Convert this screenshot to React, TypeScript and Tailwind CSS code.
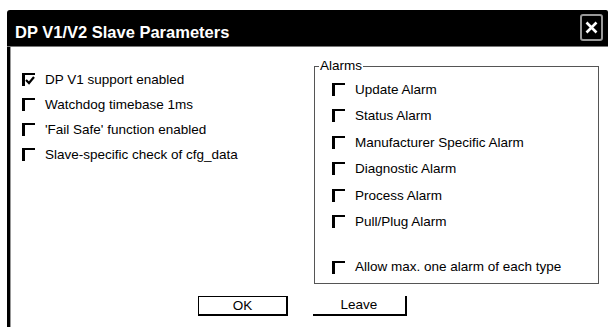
import React from "react";

function Box({ checked }: { checked?: boolean }) {
  return (
    <span className="relative w-[13px] h-[13px] border-t-2 border-l-[3px] border-black shrink-0 flex items-center justify-center">
      {checked && (
        <svg width="10" height="9" viewBox="0 0 10 9" className="-mt-[1px]">
          <polyline points="1,4 4,7 9,1" fill="none" stroke="#000" strokeWidth="2.2" />
        </svg>
      )}
    </span>
  );
}

function Row({ label, checked, h }: { label: string; checked?: boolean; h: string }) {
  return (
    <div className={`flex items-center gap-[10px] ${h}`}>
      <Box checked={checked} />
      <span className="leading-none whitespace-nowrap">{label}</span>
    </div>
  );
}

export default function App() {
  const left = [
    { l: "DP V1 support enabled", c: true },
    { l: "Watchdog timebase 1ms" },
    { l: "'Fail Safe' function enabled" },
    { l: "Slave-specific check of cfg_data" },
  ];
  const alarms = [
    "Update Alarm",
    "Status Alarm",
    "Manufacturer Specific Alarm",
    "Diagnostic Alarm",
    "Process Alarm",
    "Pull/Plug Alarm",
  ];
  return (
    <div
      className="w-[608px] h-[327px] bg-white pt-[10px] pl-[7px] overflow-hidden flex flex-col text-black text-[13.5px]"
      style={{ fontFamily: "'Liberation Sans', Arial, sans-serif" }}
    >
      <div className="h-[37px] bg-black border-b border-[#777] rounded-tl-[3px] rounded-tr-[2px] flex items-center justify-between pl-[8px] pr-[5px] shrink-0">
        <span className="text-white font-bold text-[16.5px] leading-none mt-[8px] whitespace-nowrap">
          DP V1/V2 Slave Parameters
        </span>
        <span className="w-[23px] h-[27px] border-2 border-[#999] rounded-[3px] flex items-center justify-center -mt-[1px]">
          <svg width="13" height="13" viewBox="0 0 13 13">
            <path d="M1.5 1.5 L11.5 11.5 M11.5 1.5 L1.5 11.5" stroke="#fff" strokeWidth="2.6" />
          </svg>
        </span>
      </div>
      <div className="flex-1 border-l-[3px] border-black flex">
        <div className="flex-1 border-l border-[#999] flex flex-col">
          <div className="flex">
            <div className="flex-1 flex flex-col pt-[20px] pl-[11px]">
              {left.map((r) => (
                <Row key={r.l} label={r.l} checked={r.c} h="h-[25px]" />
              ))}
            </div>
            <div className="relative mt-[19px] mr-[9px] w-[285px] h-[218px] border border-[#555] flex flex-col pt-[9px] pl-[17px]">
              <span className="absolute -top-[8px] left-[4px] bg-white px-[1px] leading-none">Alarms</span>
              {alarms.map((a) => (
                <Row key={a} label={a} h="h-[26.5px]" />
              ))}
              <div className="mt-[19px]">
                <Row label="Allow max. one alarm of each type" h="h-[26px]" />
              </div>
            </div>
          </div>
          <div className="flex gap-[25px] pl-[187px] mt-[12px]">
            <div className="w-[90px] h-[20px] border border-black border-r-2 border-b-2 flex items-center justify-center leading-none">
              OK
            </div>
            <div className="w-[94px] h-[20px] border-r-2 border-b-2 border-black flex items-center justify-center leading-none">
              Leave
            </div>
          </div>
        </div>
      </div>
    </div>
  );
}
